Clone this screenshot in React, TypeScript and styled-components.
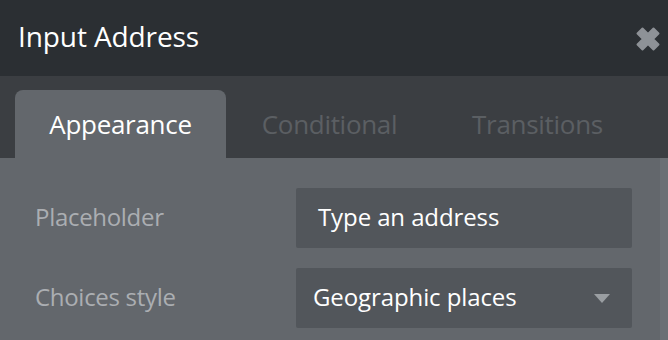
import React from "react";
import styled, { createGlobalStyle } from "styled-components";

const Global = createGlobalStyle`
  html, body { margin: 0; padding: 0; background: #63676c; }
  body { font-family: "Open Sans", "Noto Sans", sans-serif; }
  #root { width: 668px; height: 340px; overflow: hidden; }
`;

const Panel = styled.div`
  width: 668px;
  height: 340px;
  display: flex;
  flex-direction: column;
  background: #63676c;
  overflow: hidden;
`;

const Header = styled.div`
  height: 76px;
  flex: none;
  background: #2b2f33;
  display: flex;
  align-items: center;
  justify-content: space-between;
  padding: 0 6px 0 18px;
  box-sizing: border-box;
`;

const Title = styled.div`
  color: #ffffff;
  font-size: 28px;
  letter-spacing: -0.1px;
  margin-top: -4px;
`;

const Close = styled.svg`
  width: 28px;
  height: 28px;
  margin-top: 2px;
`;

const TabBar = styled.div`
  height: 82px;
  flex: none;
  background: #3b3e42;
  display: flex;
  align-items: flex-end;
  padding-left: 15px;
  box-sizing: border-box;
`;

const Tab = styled.div<{ $active?: boolean; $w: number }>`
  height: 68px;
  width: ${(p) => p.$w}px;
  display: flex;
  align-items: center;
  justify-content: center;
  font-size: 26px;
  border-radius: 8px 8px 0 0;
  background: ${(p) => (p.$active ? "#63676c" : "transparent")};
  color: ${(p) => (p.$active ? "#ffffff" : "#5b5f63")};
  letter-spacing: -0.3px;
`;

const Body = styled.div`
  flex: 1;
  display: flex;
`;

const Content = styled.div`
  flex: 1;
  padding: 30px 28px 0 35px;
  display: flex;
  flex-direction: column;
  gap: 20px;
`;

const Strip = styled.div`
  width: 8px;
  background: #6b6f74;
`;

const Row = styled.div`
  display: flex;
  align-items: center;
  height: 60px;
`;

const Label = styled.div`
  width: 261px;
  color: #abaeb2;
  font-size: 24px;
  letter-spacing: -0.3px;
  margin-top: -4px;
`;

const Field = styled.div<{ $pad: number }>`
  width: 336px;
  height: 60px;
  background: #52565b;
  border-radius: 2px;
  display: flex;
  align-items: center;
  justify-content: space-between;
  box-sizing: border-box;
  padding: 0 22px 0 ${(p) => p.$pad}px;
  color: #ffffff;
  font-size: 24px;
  letter-spacing: -0.1px;
`;

const FieldText = styled.span`
  margin-top: -3px;
`;

const Caret = styled.svg`
  width: 16px;
  height: 9px;
`;

export default function App() {
  return (
    <Panel>
      <Global />
      <Header>
        <Title>Input Address</Title>
        <Close viewBox="0 0 28 28">
          <path
            d="M3.5 8.5 L8.5 3.5 L14 9 L19.5 3.5 L24.5 8.5 L19 14 L24.5 19.5 L19.5 24.5 L14 19 L8.5 24.5 L3.5 19.5 L9 14 Z"
            fill="#8e9297"
            stroke="#8e9297"
            strokeWidth="2"
            strokeLinejoin="round"
          />
        </Close>
      </Header>
      <TabBar>
        <Tab $active $w={211}>Appearance</Tab>
        <Tab $w={207}>Conditional</Tab>
        <Tab $w={209}>Transitions</Tab>
      </TabBar>
      <Body>
        <Content>
          <Row>
            <Label>Placeholder</Label>
            <Field $pad={22}>
              <FieldText>Type an address</FieldText>
            </Field>
          </Row>
          <Row>
            <Label>Choices style</Label>
            <Field $pad={17}>
              <FieldText>Geographic places</FieldText>
              <Caret viewBox="0 0 16 9">
                <path d="M0 0 H16 L8 9 Z" fill="#9a9ea2" />
              </Caret>
            </Field>
          </Row>
        </Content>
        <Strip />
      </Body>
    </Panel>
  );
}
